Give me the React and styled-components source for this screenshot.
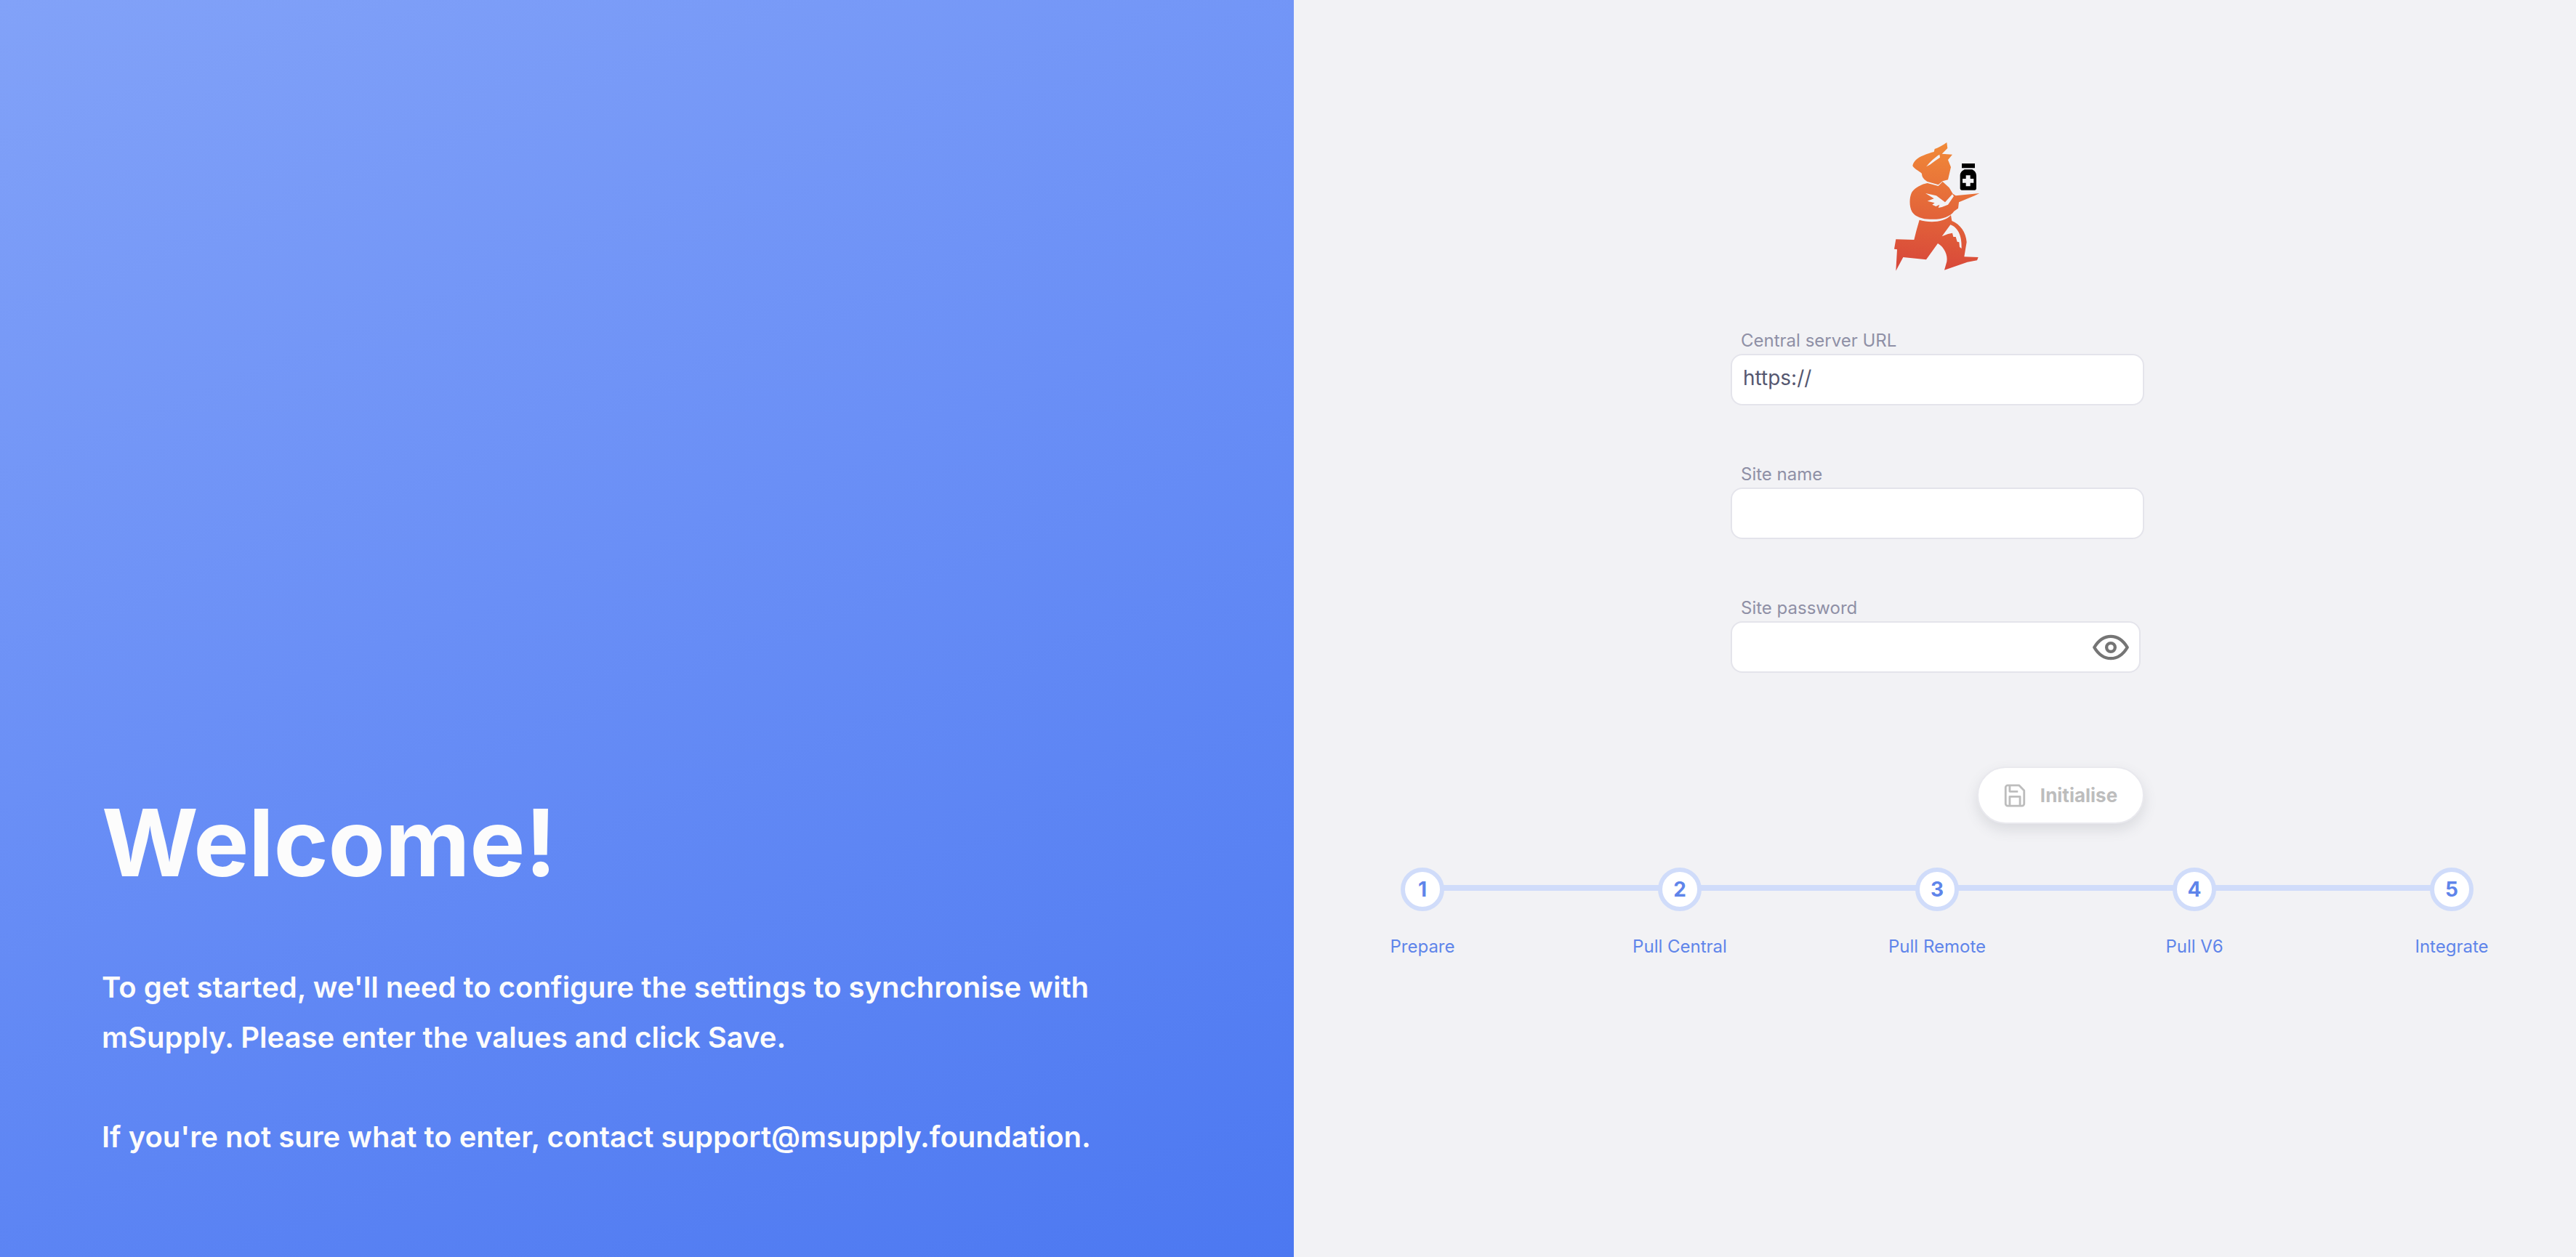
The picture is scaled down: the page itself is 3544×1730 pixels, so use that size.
import React from 'react'
import styled, { createGlobalStyle } from 'styled-components'

const GlobalStyle = createGlobalStyle`
    html, body {
        margin: 0;
        padding: 0;
    }
    body {
        font-family: Inter, "Liberation Sans", sans-serif;
        background: #f2f2f5;
    }
`

const Page = styled.div`
    display: flex;
    width: 3544px;
    height: 1730px;
    overflow: hidden;
`

const WelcomePanel = styled.section`
    width: 1780px;
    flex-shrink: 0;
    box-sizing: border-box;
    padding: 0 140px 131px;
    display: flex;
    flex-direction: column;
    justify-content: flex-end;
    background: linear-gradient(158deg, #82a2f8 0%, #6a8ff6 45%, #4c78f1 100%);
    color: #fcfcfc;
`

const Heading = styled.h1`
    margin: 0 0 88px;
    font-size: 128px;
    line-height: 1.2;
    font-weight: 700;
    letter-spacing: -0.3px;
`

const Intro = styled.p`
    margin: 0;
    font-size: 40px;
    line-height: 68.5px;
    font-weight: 600;
    white-space: pre-line;
`

const SetupPanel = styled.section`
    flex: 1;
    min-width: 0;
    display: flex;
    flex-direction: column;
    align-items: center;
    padding-top: 170px;
    background: #f2f2f5;
`

const Logo = styled.svg`
    width: 260px;
    height: 220px;
    margin-left: 16px;
    display: block;
`

const Form = styled.form`
    width: 569px;
    margin: 63px 0 0 7px;
    display: flex;
    flex-direction: column;
`

const Field = styled.div`
    display: flex;
    flex-direction: column;
    margin-bottom: 79px;
`

const Label = styled.label`
    padding-left: 14px;
    height: 34px;
    line-height: 32px;
    font-size: 24px;
    color: #8f90a6;
`

const InputBox = styled.div`
    box-sizing: border-box;
    width: ${p => p.$width || '100%'};
    height: 71px;
    padding: 0 15px;
    display: flex;
    align-items: center;
    justify-content: space-between;
    background: #fff;
    border: 2px solid #e4e4eb;
    border-radius: 16px;
    font-size: 28px;
    color: #555770;
`

const Value = styled.span`
    margin-top: -6px;
`

const EyeIcon = styled.svg`
    width: 52px;
    height: 52px;
    margin-right: -2px;
    color: #757575;
`

const ButtonRow = styled.div`
    display: flex;
    justify-content: flex-end;
    margin-top: 50px;
`

const SaveButton = styled.button`
    width: 230px;
    height: 79px;
    box-sizing: border-box;
    padding: 0 2px 0 0;
    display: flex;
    align-items: center;
    justify-content: center;
    gap: 18px;
    background: #fff;
    border: 2px solid #e9e9ee;
    border-radius: 40px;
    box-shadow: 0 8px 18px rgba(96, 97, 112, 0.16);
    font-family: inherit;
    font-size: 26px;
    font-weight: 700;
    color: #bdbdbd;
    svg {
        width: 34px;
        height: 34px;
    }
`

const Stepper = styled.ol`
    align-self: stretch;
    margin: 60px -6px 0 0;
    padding: 0;
    list-style: none;
    display: grid;
    grid-template-columns: repeat(5, 1fr);
`

const Step = styled.li`
    position: relative;
    display: flex;
    flex-direction: column;
    align-items: center;
    gap: 34px;
    &:not(:first-child)::before {
        content: '';
        position: absolute;
        top: 24px;
        right: 50%;
        width: 100%;
        height: 8px;
        background: #d0dcfa;
    }
`

const StepCircle = styled.span`
    position: relative;
    z-index: 1;
    width: 60px;
    height: 60px;
    box-sizing: border-box;
    display: flex;
    align-items: center;
    justify-content: center;
    background: #fff;
    border: 6px solid #d0dcfa;
    border-radius: 50%;
    font-size: 28px;
    font-weight: 700;
    color: #5f85ea;
`

const StepLabel = styled.span`
    font-size: 24px;
    line-height: 30px;
    color: #5f85ea;
`

const steps = ['Prepare', 'Pull Central', 'Pull Remote', 'Pull V6', 'Integrate']

const intro = `To get started, we'll need to configure the settings to synchronise with
mSupply. Please enter the values and click Save.

If you're not sure what to enter, contact support@msupply.foundation.`

function MascotLogo() {
    return (
        <Logo viewBox="0 0 780 660">
            <defs>
                <linearGradient id="mascot" gradientUnits="userSpaceOnUse" x1="400" y1="80" x2="340" y2="600">
                    <stop offset="0" stopColor="#f18a38" />
                    <stop offset="1" stopColor="#d8483a" />
                </linearGradient>
            </defs>
            <g fill="url(#mascot)">
                <path d="M415 78 L418 102 L395 125 L438 128 L420 150 L432 180 L420 232 L398 238 L380 253 L335 240 C322 232 312 222 312 207 C305 198 282 190 274 175 C276 158 292 142 318 132 C335 125 350 120 362 117 L365 105 C380 100 400 90 415 78 Z" />
                <path d="M335 246 L380 258 L398 240 L425 265 L440 290 L452 298 L550 288 L530 298 L465 325 L462 350 L445 362 C430 385 390 398 345 395 C315 395 285 385 272 365 C258 340 262 305 268 290 C275 270 305 252 335 246 Z" />
                <path d="M302 398 C340 410 405 410 432 378 L436 402 C470 415 495 450 497 490 L487 550 L545 552 L540 565 L500 572 L405 605 L415 570 C420 545 405 510 378 495 L330 562 L235 552 L205 608 L210 520 L198 518 L205 478 L280 480 L290 440 Z" />
            </g>
            <g fill="#f2f2f5">
                <path d="M330 178 C345 160 365 140 385 128 L387 140 C372 150 358 160 345 170 Z" />
                <path d="M327 288 L372 298 L408 325 L438 292 L444 300 L420 335 L395 345 L380 348 L385 335 L370 342 L355 335 L365 328 L335 320 L362 310 Z" />
                <path d="M395 466 L430 418 C458 428 478 458 476 516 L468 510 L466 490 L458 488 L452 468 L442 468 L438 452 L420 456 Z" />
            </g>
            <path d="M477 165 H531 V184 H477 Z M488 190 H520 C530 195 537 203 537 215 V268 C537 272 534 275 530 275 H477 C473 275 470 272 470 268 V215 C470 203 478 195 488 190 Z" fill="#000" />
            <path d="M494 214 H512 V228 H526 V245 H512 V259 H494 V245 H480 V228 H494 Z" fill="#f2f2f5" />
        </Logo>
    )
}

function App() {
    return (
        <Page>
            <GlobalStyle />
            <WelcomePanel>
                <Heading>Welcome!</Heading>
                <Intro>{intro}</Intro>
            </WelcomePanel>
            <SetupPanel>
                <MascotLogo />
                <Form>
                    <Field>
                        <Label>Central server URL</Label>
                        <InputBox><Value>https://</Value></InputBox>
                    </Field>
                    <Field>
                        <Label>Site name</Label>
                        <InputBox />
                    </Field>
                    <Field>
                        <Label>Site password</Label>
                        <InputBox $width="564px">
                            <span />
                            <EyeIcon viewBox="0 0 24 24" fill="none" stroke="currentColor" strokeWidth="2" strokeLinejoin="round">
                                <path d="M1.5 12 C4.5 7 8 5 12 5 C16 5 19.5 7 22.5 12 C19.5 17 16 19 12 19 C8 19 4.5 17 1.5 12 Z" />
                                <circle cx="12" cy="12" r="2.7" />
                            </EyeIcon>
                        </InputBox>
                    </Field>
                    <ButtonRow>
                        <SaveButton type="button" disabled>
                            <svg viewBox="0 0 24 24" fill="none" stroke="currentColor" strokeWidth="2" strokeLinejoin="round">
                                <path d="M5 2 H16 L21 7 V20 C21 21 20 22 19 22 H5 C4 22 3 21 3 20 V4 C3 3 4 2 5 2 Z" />
                                <path d="M7 2 V8 H15 M7 22 V13 H17 V22" />
                            </svg>
                            Initialise
                        </SaveButton>
                    </ButtonRow>
                </Form>
                <Stepper>
                    {steps.map((step, index) => (
                        <Step key={step}>
                            <StepCircle>{index + 1}</StepCircle>
                            <StepLabel>{step}</StepLabel>
                        </Step>
                    ))}
                </Stepper>
            </SetupPanel>
        </Page>
    )
}

export default App
